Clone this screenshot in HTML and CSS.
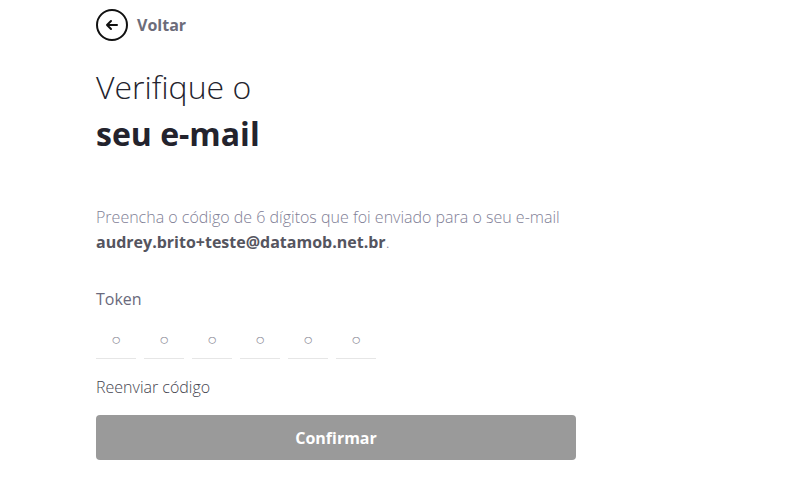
FILE: index.html
```html
<!DOCTYPE html>
<html lang="pt-BR">
<head>
<meta charset="utf-8">
<title>Verifique o seu e-mail</title>
<link rel="stylesheet" href="styles.css">
</head>
<body>
<main class="page">
  <a class="back" href="#">
    <span class="back-icon">
      <svg width="32" height="32" viewBox="0 0 32 32" fill="none" stroke="#111" stroke-width="2" stroke-linecap="round" stroke-linejoin="round">
        <circle cx="16" cy="16" r="15"/>
        <path d="M21 16H11M15 12l-4 4 4 4"/>
      </svg>
    </span>
    <span class="back-text">Voltar</span>
  </a>
  <h1 class="title"><span class="light">Verifique o</span><br><strong>seu e-mail</strong></h1>
  <p class="desc">Preencha o código de 6 dígitos que foi enviado para o seu e-mail <strong>audrey.brito+teste@datamob.net.br</strong>.</p>
  <label class="label">Token</label>
  <div class="token">
    <input class="digit" placeholder="○" maxlength="1">
    <input class="digit" placeholder="○" maxlength="1">
    <input class="digit" placeholder="○" maxlength="1">
    <input class="digit" placeholder="○" maxlength="1">
    <input class="digit" placeholder="○" maxlength="1">
    <input class="digit" placeholder="○" maxlength="1">
  </div>
  <a class="resend" href="#">Reenviar código</a>
  <button class="confirm" disabled>Confirmar</button>
</main>
</body>
</html>
```
FILE: styles.css
```css
* { box-sizing: border-box; }
html, body { margin: 0; background: #fff; }
body { font-family: "Open Sans", "Noto Sans", sans-serif; color: #22222b; }
.page {
  width: 480px;
  margin-left: 96px;
  padding-top: 9px;
  display: flex;
  flex-direction: column;
  align-items: flex-start;
}
.back {
  display: flex;
  align-items: center;
  gap: 9px;
  text-decoration: none;
}
.back-icon { display: flex; width: 32px; height: 32px; }
.back-text { font-weight: 700; font-size: 16px; color: #6c6c7a; }
.title {
  margin: 22px 0 0;
  font-size: 32px;
  line-height: 47px;
  font-weight: 300;
  color: #23232d;
}
.title strong { font-weight: 700; }
.desc {
  margin: 48px 0 0;
  font-size: 16px;
  line-height: 25px;
  font-weight: 300;
  color: #7f8096;
}
.desc strong { font-weight: 700; color: #55555f; }
.label {
  margin-top: 33px;
  font-size: 16px;
  font-weight: 400;
  color: #6a6a7c;
  line-height: 22px;
}
.token {
  display: flex;
  gap: 8px;
  margin-top: 9px;
}
.digit {
  width: 40px;
  height: 40px;
  border: none;
  border-bottom: 1px solid #e6e6e6;
  outline: none;
  text-align: center;
  font-family: inherit;
  font-size: 16px;
  padding: 0;
  color: #333;
}
.digit::placeholder { color: #8f8d9a; }
.resend {
  margin-top: 17px;
  font-size: 16px;
  font-weight: 300;
  color: #45454f;
  text-decoration: none;
  line-height: 22px;
}
.confirm {
  margin-top: 17px;
  width: 480px;
  height: 45px;
  border: none;
  border-radius: 4px;
  background: #9a9a9a;
  color: #fff;
  font-family: inherit;
  font-weight: 700;
  font-size: 16px;
}
```
